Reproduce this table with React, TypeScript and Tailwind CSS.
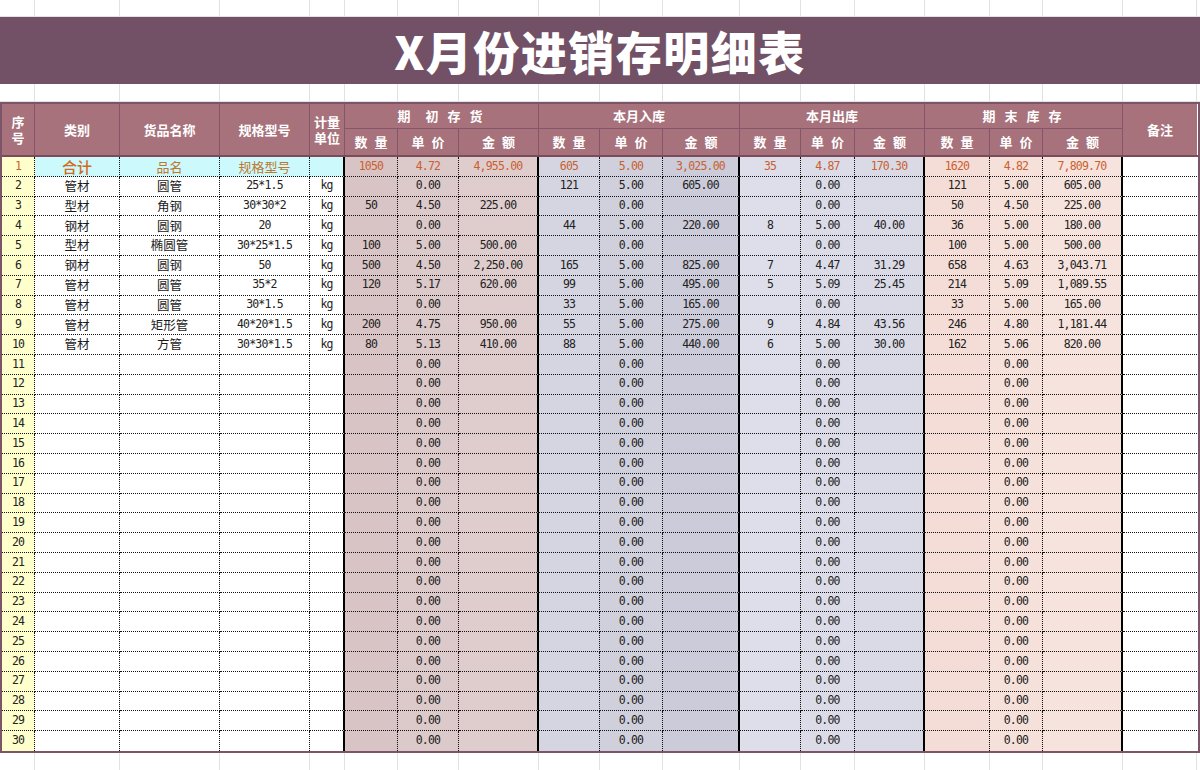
import React from 'react';

const COLS =
  'grid grid-cols-[33px_85px_100px_90px_35px_53px_61px_80px_61px_63px_77px_61px_54px_70px_65px_53px_80px_74px]';

const CJK = "font-['Noto_Sans_CJK_SC',sans-serif]";
const MONO = "font-['DejaVu_Sans_Mono','Noto_Sans_CJK_SC',monospace] text-[11.5px] tracking-[-0.8px]";

// body colours per column (期初 / 本月入库 / 本月出库 / 期末)
const bodyBg: Record<number, string> = {
  0: 'bg-[#ffffcc]',
  5: 'bg-[#d9c4c5]',
  6: 'bg-[#dcc9ca]',
  7: 'bg-[#dfcdce]',
  8: 'bg-[#d5d5e1]',
  9: 'bg-[#d0d0dd]',
  10: 'bg-[#cbcbd9]',
  11: 'bg-[#dedeea]',
  12: 'bg-[#dcdce8]',
  13: 'bg-[#dadae6]',
  14: 'bg-[#f4ddd7]',
  15: 'bg-[#f5e0da]',
  16: 'bg-[#f6e3dd]',
};

const groupEnd = [4, 7, 10, 13, 16];

const filled: string[][] = [
  ['合计', '品名', '规格型号', '', '1050', '4.72', '4,955.00', '605', '5.00', '3,025.00', '35', '4.87', '170.30', '1620', '4.82', '7,809.70', ''],
  ['管材', '圆管', '25*1.5', 'kg', '', '0.00', '', '121', '5.00', '605.00', '', '0.00', '', '121', '5.00', '605.00', ''],
  ['型材', '角钢', '30*30*2', 'kg', '50', '4.50', '225.00', '', '0.00', '', '', '0.00', '', '50', '4.50', '225.00', ''],
  ['钢材', '圆钢', '20', 'kg', '', '0.00', '', '44', '5.00', '220.00', '8', '5.00', '40.00', '36', '5.00', '180.00', ''],
  ['型材', '椭圆管', '30*25*1.5', 'kg', '100', '5.00', '500.00', '', '0.00', '', '', '0.00', '', '100', '5.00', '500.00', ''],
  ['钢材', '圆钢', '50', 'kg', '500', '4.50', '2,250.00', '165', '5.00', '825.00', '7', '4.47', '31.29', '658', '4.63', '3,043.71', ''],
  ['管材', '圆管', '35*2', 'kg', '120', '5.17', '620.00', '99', '5.00', '495.00', '5', '5.09', '25.45', '214', '5.09', '1,089.55', ''],
  ['管材', '圆管', '30*1.5', 'kg', '', '0.00', '', '33', '5.00', '165.00', '', '0.00', '', '33', '5.00', '165.00', ''],
  ['管材', '矩形管', '40*20*1.5', 'kg', '200', '4.75', '950.00', '55', '5.00', '275.00', '9', '4.84', '43.56', '246', '4.80', '1,181.44', ''],
  ['管材', '方管', '30*30*1.5', 'kg', '80', '5.13', '410.00', '88', '5.00', '440.00', '6', '5.00', '30.00', '162', '5.06', '820.00', ''],
];

const empty = ['', '', '', '', '', '0.00', '', '', '0.00', '', '', '0.00', '', '', '0.00', '', ''];
const rows = [...filled, ...Array.from({ length: 20 }, () => empty)];

function GridLine({ h }: { h: string }) {
  return (
    <div className={`${COLS} pl-[2px] ${h} border-b border-[#e2e2e2]`}>
      {Array.from({ length: 18 }).map((_, i) => (
        <div key={i} className="border-r border-[#e2e2e2]" />
      ))}
    </div>
  );
}

const hd = `flex items-center justify-center text-center bg-[#a7727b] text-white font-bold text-[13px] leading-[16px] ${CJK} border-[#85566a]`;

export default function App() {
  const sub = ['数 量', '单 价', '金 额'];

  return (
    <div className="w-[1200px] h-[770px] bg-white overflow-hidden">
      <GridLine h="h-[17px]" />
      {/* Title */}
      <div className={`h-[67px] bg-[#725065] flex items-center justify-center text-white text-[46px] font-black tracking-[1.5px] ${CJK}`}>
        X月份进销存明细表
      </div>
      <GridLine h="h-[18px]" />

      {/* Table */}
      <div className="border-2 border-[#7c5468] w-[1200px]">
        {/* Header */}
        <div className={`${COLS} grid-rows-[25px_26px] border-b-2 border-[#7a4b5b]`}>
          <div className={`${hd} row-span-2 border-r`}>
            <span className="w-[13px] break-all">序号</span>
          </div>
          <div className={`${hd} row-span-2 border-r`}>类别</div>
          <div className={`${hd} row-span-2 border-r`}>货品名称</div>
          <div className={`${hd} row-span-2 border-r`}>规格型号</div>
          <div className={`${hd} row-span-2 border-r`}>
            <span className="w-[26px] break-all">计量单位</span>
          </div>
          <div className={`${hd} col-span-3 border-r border-b tracking-[3px]`}>期&nbsp;&nbsp;初&nbsp;存&nbsp;货</div>
          <div className={`${hd} col-span-3 border-r border-b`}>本月入库</div>
          <div className={`${hd} col-span-3 border-r border-b`}>本月出库</div>
          <div className={`${hd} col-span-3 border-r border-b tracking-[3px]`}>期&nbsp;末&nbsp;库&nbsp;存</div>
          <div className={`${hd} row-span-2`}>备注</div>
          {[0, 1, 2, 3].flatMap((g) =>
            sub.map((s, j) => (
              <div key={`${g}-${j}`} className={`${hd} border-r tracking-[2px] pl-[2px]`}>
                {s}
              </div>
            ))
          )}
        </div>

        {/* Body */}
        <div className={`${COLS} auto-rows-[19.8px]`}>
          {rows.flatMap((r, ri) => {
            const cells = [String(ri + 1), ...r];
            const last = ri === rows.length - 1;
            return cells.map((c, ci) => {
              const isFirst = ri === 0;
              let bg = bodyBg[ci] ?? 'bg-white';
              if (isFirst && ci >= 1 && ci <= 4) bg = 'bg-[#ccf9fc]';
              const thick = groupEnd.includes(ci);
              const border = [
                last ? '' : 'border-b border-dotted border-[#111]',
                ci === 17 ? '' : thick ? 'border-r-2 [border-right-style:solid] border-r-black' : 'border-r border-dotted border-r-[#111]',
              ].join(' ');

              const cjk = ci >= 1 && ci <= 2;
              let txt = `${MONO} text-[#222]`;
              if (cjk) txt = `${CJK} text-[12.5px] text-[#1a1a1a]`;
              if (isFirst) {
                if (ci === 1) txt = `${CJK} text-[15px] font-medium text-[#d2691e]`;
                else if (ci === 2 || ci === 3) txt = `${CJK} text-[13px] text-[#c0762e]`;
                else txt = `${MONO} text-[#c9602f]`;
              }

              return (
                <div
                  key={`${ri}-${ci}`}
                  className={`${bg} ${border} ${txt} flex items-center justify-center whitespace-nowrap overflow-hidden leading-none`}
                >
                  {c}
                </div>
              );
            });
          })}
        </div>
      </div>
      <GridLine h="h-[19px]" />
    </div>
  );
}
